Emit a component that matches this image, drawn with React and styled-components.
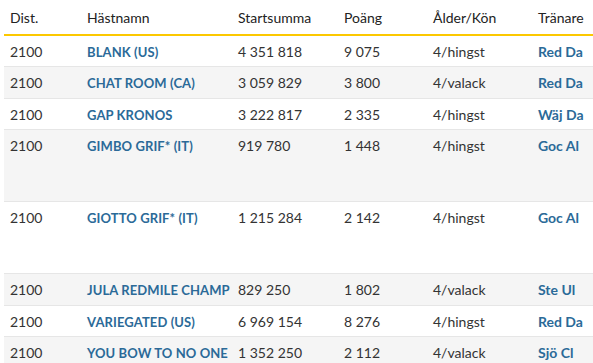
import React from "react";
import styled, { createGlobalStyle } from "styled-components";

const Global = createGlobalStyle`
  html, body { margin: 0; padding: 0; background: #fff; overflow: hidden; }
  body { font-family: Lato, "Open Sans", sans-serif; }
`;

const Wrap = styled.div`
  padding-left: 4px;
  width: 640px;
`;

const Table = styled.table`
  border-collapse: collapse;
  width: 100%;
  table-layout: fixed;
  font-size: 14px;
  color: #333;
`;

const Th = styled.th`
  text-align: left;
  font-weight: 400;
  color: #222;
  height: 34px;
  padding: 0 6px;
  vertical-align: middle;
  border-bottom: 2px solid #fcc800;
  white-space: nowrap;
`;

const Tr = styled.tr`
  background: ${(p) => (p.$odd ? "#f5f5f5" : "#fff")};
  border-bottom: 1px solid #e6e6e6;
  height: ${(p) => (p.$tall ? "72px" : "31.5px")};
`;

const Td = styled.td`
  padding: 7px 6px 0;
  vertical-align: top;
  white-space: nowrap;
  line-height: 17px;
`;

const Link = styled.span`
  color: #2b6a98;
  font-weight: 700;
  font-size: ${(p) => (p.$name ? "13px" : "14px")};
  letter-spacing: ${(p) => (p.$name ? "0.1px" : "0")};
`;

const rows = [
  ["2100", "BLANK (US)", "4 351 818", "9 075", "4/hingst", "Red Da"],
  ["2100", "CHAT ROOM (CA)", "3 059 829", "3 800", "4/valack", "Red Da"],
  ["2100", "GAP KRONOS", "3 222 817", "2 335", "4/hingst", "Wäj Da"],
  ["2100", "GIMBO GRIF* (IT)", "919 780", "1 448", "4/hingst", "Goc Al", true],
  ["2100", "GIOTTO GRIF* (IT)", "1 215 284", "2 142", "4/hingst", "Goc Al", true],
  ["2100", "JULA REDMILE CHAMP", "829 250", "1 802", "4/valack", "Ste Ul"],
  ["2100", "VARIEGATED (US)", "6 969 154", "8 276", "4/hingst", "Red Da"],
  ["2100", "YOU BOW TO NO ONE", "1 352 250", "2 112", "4/valack", "Sjö Cl"],
];

export default function App() {
  return (
    <>
      <Global />
      <Wrap>
        <Table>
          <colgroup>
            <col style={{ width: 77 }} />
            <col style={{ width: 151 }} />
            <col style={{ width: 106 }} />
            <col style={{ width: 89 }} />
            <col style={{ width: 105 }} />
            <col />
          </colgroup>
          <thead>
            <tr>
              <Th>Dist.</Th>
              <Th>Hästnamn</Th>
              <Th>Startsumma</Th>
              <Th>Poäng</Th>
              <Th>Ålder/Kön</Th>
              <Th>Tränare</Th>
            </tr>
          </thead>
          <tbody>
            {rows.map((r, i) => (
              <Tr key={i} $odd={i % 2 === 1} $tall={r[6]}>
                <Td>{r[0]}</Td>
                <Td><Link $name>{r[1]}</Link></Td>
                <Td>{r[2]}</Td>
                <Td>{r[3]}</Td>
                <Td>{r[4]}</Td>
                <Td><Link>{r[5]}</Link></Td>
              </Tr>
            ))}
          </tbody>
        </Table>
      </Wrap>
    </>
  );
}
